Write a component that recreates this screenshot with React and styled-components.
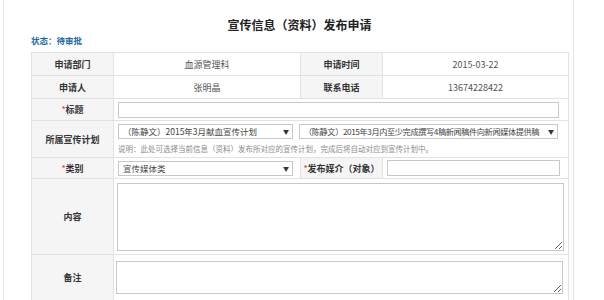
import React from 'react';
import styled, { createGlobalStyle } from 'styled-components';

const GlobalStyle = createGlobalStyle`
  body {
    margin: 0;
    background: #fff;
    font-family: "Noto Sans CJK SC", "Liberation Sans", sans-serif;
  }
`;

const Page = styled.div`
  margin-left: 3px;
  width: 569px;
  height: 300px;
  border-left: 1px solid #e6e6e6;
  border-right: 1px solid #e6e6e6;
  overflow: hidden;
`;

const Title = styled.h1`
  margin: 0 0 0 27px;
  width: 537px;
  padding-top: 15px;
  height: 19px;
  font-size: 12px;
  line-height: 19px;
  font-weight: bold;
  color: #222;
  text-align: center;
`;

const Status = styled.div`
  margin: 0 0 0 27px;
  height: 18px;
  line-height: 13px;
  font-size: 8.5px;
  font-weight: bold;
  color: #1d6aa5;
`;

const Table = styled.table`
  margin-left: 27px;
  width: 537px;
  border-collapse: collapse;
  table-layout: fixed;
  font-size: 9px;
`;

const Row = styled.tr`
  height: ${p => p.$h}px;
`;

const Label = styled.th`
  background: #f5f5f5;
  border: 1px solid #e2e2e2;
  font-weight: bold;
  color: #333;
  text-align: center;
  padding: 0;
`;

const Value = styled.td`
  border: 1px solid #e2e2e2;
  color: #555;
  text-align: center;
  padding: 0;
`;

const Field = styled.td`
  border: 1px solid #e2e2e2;
  padding: ${p => p.$pad || '0 4px'};
  vertical-align: middle;
`;

const Star = styled.span`
  color: #d9302b;
  font-weight: normal;
`;

const TextInput = styled.input`
  display: block;
  box-sizing: border-box;
  width: ${p => p.$w}px;
  height: 16px;
  margin: 0;
  border: 1px solid #c8c8c8;
  background: #fff;
  padding: 0 4px;
  font-size: 9px;
  font-family: inherit;
`;

const SelectRow = styled.div`
  display: flex;
  gap: 6px;
`;

const SelectBox = styled.div`
  position: relative;
  box-sizing: border-box;
  width: ${p => p.$w}px;
  height: 15px;
  border: 1px solid #c8c8c8;
  background: #fff;
  color: #444;
  font-size: ${p => (p.$tight ? '8.2px' : '8.5px')};
  letter-spacing: ${p => (p.$tight ? '-0.4px' : '0')};
  line-height: 13px;
  padding: 0 12px 0 4px;
  white-space: nowrap;
  overflow: hidden;
`;

const Arrow = styled.span`
  position: absolute;
  right: 0;
  top: 0;
  width: 12px;
  text-align: center;
  background: #fff;
  font-size: 6px;
  letter-spacing: 0;
  line-height: 13px;
  color: #333;
`;

const Note = styled.div`
  margin-top: 4px;
  font-size: 7.5px;
  color: #8a8a8a;
  white-space: nowrap;
`;

const TextArea = styled.textarea`
  display: block;
  box-sizing: border-box;
  width: ${p => p.$w}px;
  height: ${p => p.$h}px;
  margin: 0;
  border: 1px solid #c8c8c8;
  font-family: inherit;
`;

const Select = ({ w, tight, children }) => (
  <SelectBox $w={w} $tight={tight}>
    {children}
    <Arrow>▼</Arrow>
  </SelectBox>
);

export default function App() {
  return (
    <>
      <GlobalStyle />
      <Page>
        <Title>宣传信息（资料）发布申请</Title>
        <Status>状态：待审批</Status>
        <Table>
          <colgroup>
            <col style={{ width: 82 }} />
            <col style={{ width: 187 }} />
            <col style={{ width: 82 }} />
            <col style={{ width: 186 }} />
          </colgroup>
          <tbody>
            <Row $h={23}>
              <Label>申请部门</Label>
              <Value>血源管理科</Value>
              <Label>申请时间</Label>
              <Value>2015-03-22</Value>
            </Row>
            <Row $h={23}>
              <Label>申请人</Label>
              <Value>张明晶</Value>
              <Label>联系电话</Label>
              <Value>13674228422</Value>
            </Row>
            <Row $h={22}>
              <Label><Star>*</Star>标题</Label>
              <Field colSpan={3}>
                <TextInput $w={441} />
              </Field>
            </Row>
            <Row $h={37}>
              <Label>所属宣传计划</Label>
              <Field colSpan={3}>
                <SelectRow>
                  <Select w={175}>（陈静文）2015年3月献血宣传计划</Select>
                  <Select w={259} tight>（陈静文）2015年3月内至少完成撰写4稿新闻稿件向新闻媒体提供稿</Select>
                </SelectRow>
                <Note>说明：此处可选择当前信息（资料）发布所对应的宣传计划，完成后将自动对应到宣传计划中。</Note>
              </Field>
            </Row>
            <Row $h={21}>
              <Label><Star>*</Star>类别</Label>
              <Field>
                <Select w={175}>宣传媒体类</Select>
              </Field>
              <Label><Star>*</Star>发布媒介（对象）</Label>
              <Field>
                <TextInput $w={173} />
              </Field>
            </Row>
            <Row $h={76}>
              <Label>内容</Label>
              <Field colSpan={3} $pad="0 3px">
                <TextArea $w={447} $h={68} />
              </Field>
            </Row>
            <Row $h={46}>
              <Label>备注</Label>
              <Field colSpan={3} $pad="0 2px">
                <TextArea $w={447} $h={33} />
              </Field>
            </Row>
          </tbody>
        </Table>
      </Page>
    </>
  );
}
